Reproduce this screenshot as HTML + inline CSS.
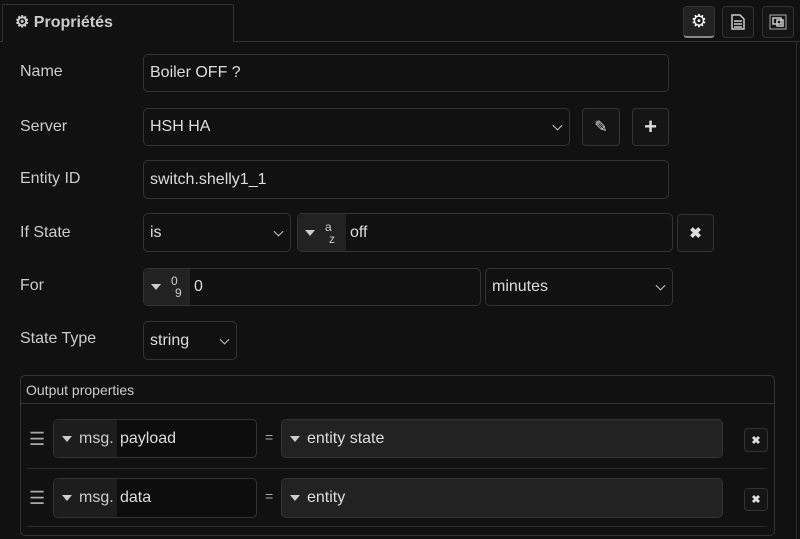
<!DOCTYPE html><html><head><style>
*{box-sizing:border-box}
body{margin:0;width:800px;height:539px;background:#111;font-family:"Liberation Sans",sans-serif;color:#ccc;position:relative;overflow:hidden}
.a{position:absolute}
.in{position:absolute;border:1px solid #333;border-radius:5px;background:#111;font-size:16px;color:#ddd;padding-left:6px;display:flex;align-items:center}
.lbl{position:absolute;left:20px;font-size:16px;color:#ccc}
.chev{position:absolute;right:8px;top:50%;width:7px;height:7px;border-right:1.5px solid #ccc;border-bottom:1.5px solid #ccc;transform:translateY(-70%) rotate(45deg)}
.btn{position:absolute;border:1px solid #333;border-radius:4px;background:#151515;display:flex;align-items:center;justify-content:center;color:#ddd}
.tb{position:absolute;top:0;bottom:0;left:0;background:#222;border-radius:5px 0 0 5px;display:flex;align-items:center;font-size:16px;color:#ccc}
.tri{width:0;height:0;border-left:5px solid transparent;border-right:5px solid transparent;border-top:6px solid #ccc;display:inline-block}
.x{font-weight:bold;font-size:15px}
</style></head><body>
<div class="a" style="left:0;top:41px;width:800px;height:1px;background:#333"></div>
<div class="a" style="left:796px;top:41px;width:1px;height:498px;background:#2a2a2a"></div>
<div class="a" style="left:2px;top:4px;width:232px;height:38px;border:1px solid #333;border-bottom:none;background:#111;border-radius:2px 2px 0 0"></div>
<div class="a" style="left:15px;top:12px;font-size:16px;font-weight:bold;color:#ccc">⚙ Propriétés</div>
<div class="btn" style="left:683px;top:6px;width:32px;height:32px;background:#222;border-bottom:2px solid #888;font-size:18px;color:#fff">⚙</div>
<div class="btn" style="left:722px;top:6px;width:32px;height:32px"><svg width="14" height="16"><path d="M1 1h8l4 4v10H1z M3 7h8M3 10h8M3 13h8" fill="none" stroke="#ccc" stroke-width="1.5"/></svg></div>
<div class="btn" style="left:762px;top:6px;width:32px;height:32px"><svg width="18" height="16"><rect x="1" y="1" width="16" height="14" fill="none" stroke="#aaa"/><rect x="4" y="4" width="8" height="6" fill="none" stroke="#ccc" stroke-width="1.5"/><rect x="8" y="6" width="6" height="6" fill="none" stroke="#ccc" stroke-width="1.5"/></svg></div>

<div class="lbl" style="top:63px">Name</div>
<div class="in" style="left:143px;top:54px;width:526px;height:38px">Boiler OFF ?</div>

<div class="lbl" style="top:118px">Server</div>
<div class="in" style="left:143px;top:108px;width:427px;height:38px">HSH HA<span class="chev"></span></div>
<div class="btn" style="left:582px;top:108px;width:38px;height:38px;font-size:16px">✎</div>
<div class="btn" style="left:632px;top:108px;width:37px;height:38px;font-size:22px;font-weight:bold">+</div>

<div class="lbl" style="top:170px">Entity ID</div>
<div class="in" style="left:143px;top:160px;width:526px;height:39px">switch.shelly1_1</div>

<div class="lbl" style="top:224px">If State</div>
<div class="in" style="left:143px;top:213px;width:148px;height:39px">is<span class="chev"></span></div>
<div class="in" style="left:297px;top:213px;width:376px;height:39px;padding-left:52px">off<div class="tb" style="width:48px;padding-left:7px"><span class="tri"></span><span style="font-size:12px;margin-left:10px;line-height:1">a<br><span style="margin-left:4px">z</span></span></div></div>
<div class="btn x" style="left:677px;top:214px;width:37px;height:38px">✖</div>

<div class="lbl" style="top:277px">For</div>
<div class="in" style="left:143px;top:268px;width:338px;height:38px;padding-left:50px">0<div class="tb" style="width:46px;padding-left:7px"><span class="tri"></span><span style="font-size:12px;margin-left:10px;line-height:1">0<br><span style="margin-left:4px">9</span></span></div></div>
<div class="in" style="left:485px;top:268px;width:188px;height:38px">minutes<span class="chev"></span></div>

<div class="lbl" style="top:330px">State Type</div>
<div class="in" style="left:143px;top:321px;width:94px;height:39px">string<span class="chev"></span></div>

<div class="a" style="left:20px;top:375px;width:755px;height:161px;border:1px solid #333;border-radius:5px"></div>
<div class="a" style="left:26px;top:382px;font-size:14px;color:#ccc">Output properties</div>
<div class="a" style="left:21px;top:403px;width:753px;height:1px;background:#333"></div>
<div class="a" style="left:27px;top:468px;width:740px;height:1px;background:#2c2c2c"></div>
<div class="a" style="left:27px;top:526px;width:740px;height:1px;background:#2c2c2c"></div>

<div class="a" style="left:29px;top:429px;font-size:18px;color:#aaa">☰</div>
<div class="in" style="left:53px;top:419px;width:204px;height:39px;padding-left:66px;background:#0d0d0d">payload<div class="tb" style="width:63px;padding-left:8px;background:#1d1d1d"><span class="tri"></span><span style="margin-left:7px">msg.</span></div></div>
<div class="a" style="left:265px;top:429px;font-size:14px;color:#aaa">=</div>
<div class="in" style="left:281px;top:419px;width:442px;height:39px;background:#222;padding-left:8px"><span class="tri"></span><span style="margin-left:7px">entity state</span></div>
<div class="btn" style="left:744px;top:428px;width:24px;height:24px;font-size:11px;font-weight:bold">✖</div>

<div class="a" style="left:29px;top:488px;font-size:18px;color:#aaa">☰</div>
<div class="in" style="left:53px;top:478px;width:204px;height:40px;padding-left:66px;background:#0d0d0d">data<div class="tb" style="width:63px;padding-left:8px;background:#1d1d1d"><span class="tri"></span><span style="margin-left:7px">msg.</span></div></div>
<div class="a" style="left:265px;top:488px;font-size:14px;color:#aaa">=</div>
<div class="in" style="left:281px;top:478px;width:442px;height:40px;background:#222;padding-left:8px"><span class="tri"></span><span style="margin-left:7px">entity</span></div>
<div class="btn" style="left:744px;top:488px;width:24px;height:23px;font-size:11px;font-weight:bold">✖</div>
</body></html>
